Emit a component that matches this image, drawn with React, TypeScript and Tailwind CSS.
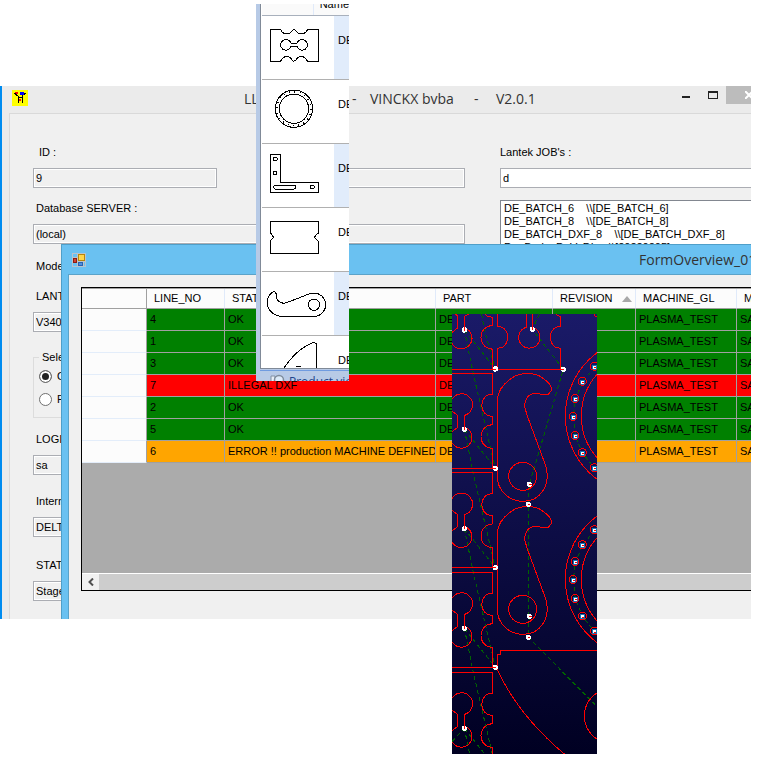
import type { ReactNode } from "react";

const TextField = ({
  id,
  label,
  value,
  className = "",
}: {
  id: string;
  label: string;
  value: string;
  className?: string;
}) => (
  <div className={className}>
    <label htmlFor={id} className="block pl-[3px] leading-4 whitespace-nowrap">
      {label}
    </label>
    <input
      id={id}
      defaultValue={value}
      readOnly
      className="mt-2 block h-5 w-full border border-[#abadb3] bg-[#f0f0f0] px-[2px] shadow-[inset_0_0_0_1px_#fff]"
    />
  </div>
);

const gap = "\u00a0\u00a0\u00a0\u00a0";

const jobs = [
  `DE_BATCH_6${gap}\\\\[DE_BATCH_6]`,
  `DE_BATCH_8${gap}\\\\[DE_BATCH_8]`,
  `DE_BATCH_DXF_8${gap}\\\\[DE_BATCH_DXF_8]`,
  `De_Bado_DeVaDL${gap}\\\\[20220205]`,
];

const rows = [
  { line: "4", status: "OK", color: "bg-[#008000]" },
  { line: "1", status: "OK", color: "bg-[#008000]" },
  { line: "3", status: "OK", color: "bg-[#008000]" },
  { line: "7", status: "ILLEGAL DXF", color: "bg-[#ff0000]" },
  { line: "2", status: "OK", color: "bg-[#008000]" },
  { line: "5", status: "OK", color: "bg-[#008000]" },
  {
    line: "6",
    status: "ERROR !! production MACHINE DEFINED",
    color: "bg-[#ffa500]",
  },
];

const headers = ["", "LINE_NO", "STATUS", "PART", "REVISION", "MACHINE_GL", "M"];

const MainForm = () => (
  <div className="flex gap-[35px] border-t border-l border-[#d9d9d9] bg-[#f0f0f0] pt-[30px] pb-[18px] pl-[23px]">
    <div className="w-[432px] shrink-0">
      <div className="flex justify-between">
        <TextField id="job-id" label={"\u00a0ID :"} value="9" className="w-[184px]" />
        <TextField id="job-name" label={"\u00a0"} value="" className="w-[184px]" />
      </div>
      <TextField id="server" label="Database SERVER :" value="(local)" className="mt-3" />
      <p className="mt-[14px] pl-[3px] leading-4">Mode :</p>
      <TextField id="version" label="LANTEK" value="V340" className="mt-[14px]" />
      <fieldset className="mt-[17px] h-[69px] border border-[#dcdcdc] px-[5px]">
        <legend className="px-[3px] leading-4">Select :</legend>
        <label className="mt-[3px] flex h-4 items-center gap-[5px]">
          <input
            type="radio"
            name="mode"
            defaultChecked
            className="m-0 size-[13px] appearance-none rounded-full border border-[#707070] bg-[#222] shadow-[inset_0_0_0_2px_#fff]"
          />
          Open
        </label>
        <label className="mt-[7px] flex h-4 items-center gap-[5px]">
          <input
            type="radio"
            name="mode"
            className="m-0 size-[13px] appearance-none rounded-full border border-[#707070] bg-white"
          />
          Fixed
        </label>
      </fieldset>
      <TextField id="login" label="LOGIN :" value="sa" className="mt-[13px]" />
      <TextField id="company" label="Internal" value="DELTA" className="mt-[18px]" />
      <TextField id="status" label="STATUS" value="Stage" className="mt-5" />
    </div>
    <div className="min-w-0 flex-1">
      <label htmlFor="jobs-filter" className="block leading-4">
        Lantek JOB's :
      </label>
      <input
        id="jobs-filter"
        defaultValue="d"
        className="mt-2 block h-5 w-full border border-r-0 border-[#abadb3] bg-white px-[2px]"
      />
      <select
        size={8}
        aria-label="Lantek jobs"
        className="mt-3 block h-[110px] w-full appearance-none overflow-hidden border border-r-0 border-[#828790] bg-white py-px"
      >
        {jobs.map((job) => (
          <option key={job} className="h-[13px] min-h-0 p-0 px-[3px] leading-[13px] whitespace-pre">
            {job}
          </option>
        ))}
      </select>
    </div>
  </div>
);

const Overview = () => (
  <section className="absolute top-[158px] right-0 bottom-0 left-[61px] flex flex-col border-t border-l border-[#4f9fc9] bg-[#6ac1f1] pl-[6px]">
    <header className="flex h-[29px] shrink-0 items-center pl-1">
      <svg viewBox="0 0 14 14" className="size-[14px] shrink-0">
        <rect width="14" height="14" fill="#b9c4cc" />
        <path d="M1 1H5V4H1zM1 10H5V13H1zM12 9H13V13H12z" fill="#6ac1f1" />
        <rect x="6.500" y="1.500" width="6" height="6" fill="#ffd54a" stroke="#b8860b" />
        <rect x="1.500" y="5.500" width="3" height="4" fill="#d04030" stroke="#8c1c10" />
        <rect x="6.500" y="9.500" width="4" height="3" fill="#4d8fe0" stroke="#2a62b0" />
      </svg>
      <h2 className="w-0 flex-1 pl-[553px] font-['Open_Sans','Noto_Sans',sans-serif] text-sm whitespace-nowrap text-[#333]">
        FormOverview_01
      </h2>
    </header>
    <div className="flex min-h-0 flex-1 flex-col border-t border-l border-[#5ba3c9] bg-[#f0f0f0] pt-3 pb-7 pl-3">
      <div className="flex flex-1 flex-col border border-r-0 border-black bg-[#ababab]">
        <table className="w-full table-fixed border-separate border-spacing-0 border-t border-[#a0a0a0] whitespace-nowrap">
          <colgroup>
            <col className="w-[65px]" />
            <col className="w-[78px]" />
            <col className="w-[211px]" />
            <col className="w-[117px]" />
            <col className="w-[83px]" />
            <col className="w-[101px]" />
            <col />
          </colgroup>
          <thead>
            <tr className="h-5 bg-[#fcfcfc]">
              {headers.map((header, idx) => (
                <th
                  key={idx}
                  className="overflow-hidden border-r border-b border-[#a0a0a0] border-r-[#e0eafa] p-0 pl-[7px] text-left font-normal first:border-r-[#a0a0a0] last:border-r-0"
                >
                  <div className="flex items-center justify-between pr-[3px]">
                    {header}
                    {header === "REVISION" && (
                      <svg viewBox="0 0 10 6" className="h-[6px] w-[10px] shrink-0">
                        <path d="M5 0L10 6H0z" fill="#a8a8a8" />
                      </svg>
                    )}
                  </div>
                </th>
              ))}
            </tr>
          </thead>
          <tbody>
            {rows.map((row) => (
              <tr key={row.line} className={`h-[22px] ${row.color}`}>
                <td className="border-r border-b border-r-[#a0a0a0] border-b-[#e3edfa] bg-[#fcfcfc] p-0" />
                {[row.line, row.status, "DE", "", "PLASMA_TEST", "SA"].map((text, idx) => (
                  <td
                    key={idx}
                    className="overflow-hidden border-r border-b border-[#a0a0a0] p-0 pl-[3px] last:border-r-0"
                  >
                    {text}
                  </td>
                ))}
              </tr>
            ))}
          </tbody>
        </table>
        <div className="mt-auto flex h-[17px] border-t border-white bg-[#f0f0f0]">
          <button aria-label="Scroll left" className="flex w-[17px] items-center justify-center">
            <svg viewBox="0 0 6 8" className="h-2 w-[6px]">
              <path d="M5 0.500L1.500 4L5 7.500" fill="none" stroke="#505050" strokeWidth="2" />
            </svg>
          </button>
          <div className="flex-1 bg-[#cdcdcd]" />
        </div>
      </div>
    </div>
  </section>
);

// thumbnails are drawn on a 3x grid, each row has its own origin
const parts: { box: string; drawing: ReactNode }[] = [
  {
    box: "66 48 216 189",
    drawing: (
      <>
        <path d="M91 88H121L124 92A17 14 0 0 0 156 92L161 88L168 92A17 14 0 0 0 200 92L206 88H236V184H203L200 180A17 15 0 0 0 168 180L161 184L156 180A17 15 0 0 0 124 180L121 184H91Z" />
        <path d="M153 130H171A16 16 0 1 1 171 139H153A16 16 0 1 1 153 130Z" />
      </>
    ),
  },
  {
    box: "66 240 216 189",
    drawing: (
      <>
        <circle cx="162" cy="326" r="56" />
        <circle cx="162" cy="326" r="44" />
        <circle cx="162" cy="326" r="51" strokeDasharray="3 13" strokeWidth="5" />
      </>
    ),
  },
  {
    box: "66 432 216 189",
    drawing: (
      <>
        <path d="M91 463H121V547H236V577H91Z" />
        <ellipse cx="106" cy="477" rx="6" ry="5" />
        <circle cx="105" cy="519" r="5" />
        <rect x="101" y="556" width="66" height="11" rx="5" />
        <ellipse cx="217" cy="561" rx="6" ry="5" />
      </>
    ),
  },
  {
    box: "66 54 216 189",
    drawing: <path d="M91 94H236V129L230 133L223 142L230 149L236 154V190H91V154L94 149L101 142L94 132L91 129Z" />,
  },
  {
    box: "66 246 216 189",
    drawing: (
      <>
        <path d="M126 379H222C244 379 257 362 257 344C257 322 238 309 222 309C211 310 195 316 184 321L140 338C126 342 113 337 109 323C109 315 111 309 103 304C90 308 81 323 81 341C83 361 102 378 126 379Z" />
        <circle cx="222" cy="344" r="17" />
      </>
    ),
  },
  {
    box: "66 438 216 189",
    drawing: <path d="M132 534C158 496 188 468 222 457L230 461V534M168 529H183" />,
  },
];

const ProductList = () => (
  <aside className="absolute top-1 left-64 flex h-[377px] w-[93px] flex-col overflow-hidden border-l-4 border-[#b7cae6] bg-[#b7cae6]">
    <div className="h-[365px] shrink-0 overflow-hidden border-b border-l border-[#808a98] bg-white pl-px">
      <div className="flex h-3 border-b border-[#a8b0bc] bg-[#fafafa]">
        <div className="w-[72px] border-r border-[#e0eafa]" />
        <div className="-mt-2 pl-[6px] leading-4">Name</div>
      </div>
      {parts.map((part, idx) => (
        <div key={part.box} className="flex h-16 border-b border-[#b0b0b0]">
          <svg
            viewBox={part.box}
            className="h-[63px] w-[72px] shrink-0"
            fill="none"
            stroke="#000"
            strokeWidth="3"
            shapeRendering="crispEdges"
          >
            {part.drawing}
          </svg>
          <div className={`flex-1 pt-4 pl-1 leading-4 ${idx % 2 === 0 ? "bg-[#e1ecfb]" : "bg-white"}`}>DE</div>
        </div>
      ))}
    </div>
    <div className="mt-px flex shrink-0 items-start border-t border-[#6f9be0] pt-[3px] pl-[10px] whitespace-nowrap text-[#20448c]">
      <svg viewBox="0 0 16 12" className="h-3 w-4 shrink-0">
        <path d="M1 2H5V11H1z" fill="#e8eef6" stroke="#8090a4" />
        <circle cx="9" cy="6" r="4.500" fill="#dceaf8" stroke="#7f8c9c" strokeWidth="1.500" />
        <path d="M12 9L15 12" stroke="#59636f" strokeWidth="2" />
      </svg>
      <span className="pl-[3px] font-['Open_Sans','Noto_Sans',sans-serif] text-xs leading-4">Product view</span>
    </div>
  </aside>
);

const unitOffsets = [-298, 0, 298, 597, 897];
const boltHoles = [
  [449, 171],
  [413, 216],
  [391, 267],
  [385, 321],
  [391, 378],
  [413, 430],
  [449, 475],
];
const pierces = [
  [262, 58],
  [355, 178],
  [253, 523],
  [250, 583],
  [253, 919],
  [250, 982],
];

const Nesting = () => (
  <svg
    viewBox="21 12 435 1320"
    className="absolute top-[314px] left-[452px] h-[440px] w-[145px]"
    fill="none"
    stroke="#ff0000"
    strokeWidth="3"
    shapeRendering="crispEdges"
  >
    <defs>
      <linearGradient id="sheet" x1="0" y1="0" x2="0" y2="1">
        <stop offset="0" stopColor="#1a1a68" />
        <stop offset="1" stopColor="#000022" />
      </linearGradient>
    </defs>
    <rect x="21" y="12" width="435" height="1320" fill="url(#sheet)" stroke="none" />
    <g stroke="#006400" strokeDasharray="12 9">
      {unitOffsets.map((dy) => (
        <path key={dy} d={`M58 ${358 + dy}L151 ${475 + dy}M58 ${358 + dy}L85 ${490 + dy}L151 ${775 + dy}`} />
      ))}
      <path d="M110 12L118 60L151 178M283 12L262 58L355 178L253 523L250 583V919M253 919L250 982L456 1190M58 1255L21 1295" />
      <path d="M449 171L413 216L391 267L385 321L391 378L413 430L449 475M449 660L413 706L391 757L385 811L391 868L413 920L449 965" />
    </g>
    {unitOffsets.map((dy) => (
      <g key={dy} transform={`translate(0 ${dy})`}>
        <path d="M21 190H143V253L128 255A36 36 0 0 0 127 316L143 320V343L127 348A36 36 0 0 0 128 412L143 416V475H21" />
        <path d="M21 268A33 33 0 1 1 59 316V352A32 32 0 1 1 21 398M21 303L38 316V352L21 365" />
      </g>
    ))}
    <path d="M143 178H355M157 12V22M157 20V48L172 52A36 36 0 0 1 172 112L157 115V178M347 178V115L332 112A36 36 0 0 1 332 52L347 48V20L338 17L334 12M447 12L450 19H456" />
    <path d="M243 12V52A32 32 0 1 0 263 52V12" />
    {[0, 399].map((dy) => (
      <g key={dy} transform={`translate(0 ${dy})`}>
        <path d="M157 268C159 238 184 214 209 199C232 187 268 188 287 200L302 211C314 220 321 230 320 241L310 253H293L272 250C248 252 238 270 239 290L246 315L303 470C318 528 283 574 235 574C190 574 157 540 157 500Z" />
        <circle cx="233" cy="499" r="42" />
      </g>
    ))}
    {[0, 490].map((dy) => (
      <g key={dy} transform={`translate(0 ${dy})`}>
        <circle cx="598" cy="318" r="237" />
        <circle cx="598" cy="318" r="189" />
        {boltHoles.map(([x, y]) => (
          <g key={y}>
            <rect x={x - 6} y={y - 6} width="12" height="12" fill="#fff" stroke="#1474b8" />
            <circle cx={x - 1} cy={y - 2} r="12" />
            <path d={`M${x - 2} ${y + 1}H${x + 5}`} />
          </g>
        ))}
      </g>
    ))}
    <path d="M456 1021H166V1034H157V1080C202 1175 270 1258 358 1332" />
    <circle cx="500" cy="1218" r="82" />
    <g fill="#fff" stroke="none">
      {unitOffsets.map((dy) => (
        <g key={dy}>
          <circle cx="58" cy={358 + dy} r="8" />
          <circle cx="151" cy={475 + dy} r="8" />
        </g>
      ))}
      {pierces.map(([x, y]) => (
        <circle key={y} cx={x} cy={y} r="8" />
      ))}
    </g>
    {unitOffsets.map((dy) => (
      <path key={dy} d={`M59 ${350 + dy}V${360 + dy}M143 ${475 + dy}H154`} />
    ))}
    <path d="M263 48V60M347 178H357M252 523H262M248 583H254M252 919H262M248 982H254" />
  </svg>
);

export default function App() {
  return (
    <main className="relative min-h-[758px] overflow-hidden bg-white pt-[86px] pr-[9px] font-['Liberation_Sans',Arial,sans-serif] text-[11px] text-black">
      <section className="relative overflow-hidden border-l-2 border-[#008cf0] bg-[#ebebeb] pl-[7px]">
        <header className="flex h-[27px] font-['Open_Sans','Noto_Sans',sans-serif] text-sm leading-[26px] whitespace-pre text-[#333]">
          <svg viewBox="0 0 16 16" className="mt-1 ml-[3px] size-4 shrink-0" shapeRendering="crispEdges">
            <rect width="16" height="16" fill="#ff0" />
            <path d="M2 3L6 6V13M14 3L10 6V13M6 7H10" fill="none" stroke="#000" strokeWidth="1" />
            <path d="M8 2H12V5H8z" fill="#00f" />
            <path d="M3 2H6V4H4zM7 9H9V11H7z" fill="#f00" />
          </svg>
          <h1 className="ml-[216px] flex w-0 flex-1">
            <span className="w-[108px] shrink-0">LLI</span>
            <span className="w-[18px] shrink-0">-</span>
            <span className="w-[104px] shrink-0">VINCKX bvba</span>
            <span className="w-[22px] shrink-0">-</span>
            <span>V2.0.1</span>
          </h1>
          <button aria-label="Minimize" className="flex h-[18px] w-[27px] items-center justify-center">
            <span className="mt-[3px] h-[2px] w-2 bg-[#222]" />
          </button>
          <button aria-label="Maximize" className="flex h-[18px] w-[27px] items-center justify-center">
            <span className="h-2 w-[10px] border border-t-2 border-[#222]" />
          </button>
          <button aria-label="Close" className="flex h-[18px] w-[25px] items-center justify-end overflow-hidden bg-[#bcbcbc]">
            <svg viewBox="0 0 6 8" className="h-2 w-[6px]">
              <path d="M0 0L8 8M8 0L0 8" stroke="#fff" strokeWidth="2" />
            </svg>
          </button>
        </header>
        <MainForm />
      </section>
      <div className="absolute top-[86px] right-[9px] left-0 h-[533px] overflow-hidden">
        <Overview />
      </div>
      <ProductList />
      <Nesting />
    </main>
  );
}
